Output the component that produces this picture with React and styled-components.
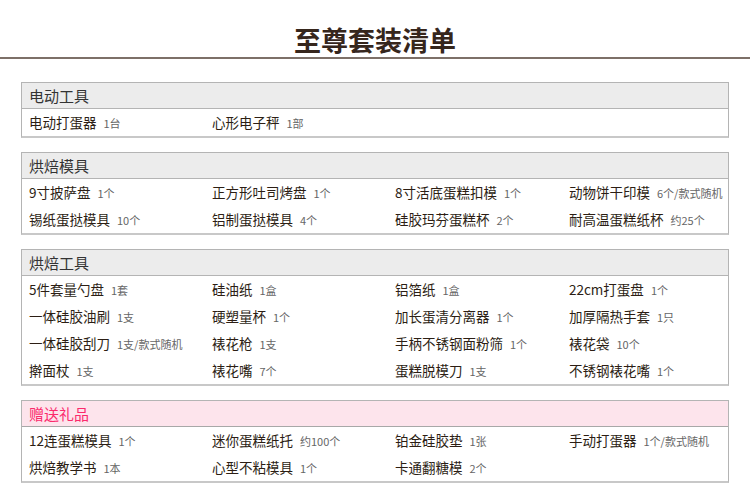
import React from 'react';
import styled, { createGlobalStyle } from 'styled-components';

const Global = createGlobalStyle`
  body { margin: 0; background: #fff; font-family: "Noto Sans CJK SC", "Noto Sans", sans-serif; }
`;

const sections = [
  { title: '电动工具', items: [['电动打蛋器', '1台'], ['心形电子秤', '1部']] },
  { title: '烘焙模具', items: [
    ['9寸披萨盘', '1个'], ['正方形吐司烤盘', '1个'], ['8寸活底蛋糕扣模', '1个'], ['动物饼干印模', '6个/款式随机'],
    ['锡纸蛋挞模具', '10个'], ['铝制蛋挞模具', '4个'], ['硅胶玛芬蛋糕杯', '2个'], ['耐高温蛋糕纸杯', '约25个'],
  ] },
  { title: '烘焙工具', items: [
    ['5件套量勺盘', '1套'], ['硅油纸', '1盒'], ['铝箔纸', '1盒'], ['22cm打蛋盘', '1个'],
    ['一体硅胶油刷', '1支'], ['硬塑量杯', '1个'], ['加长蛋清分离器', '1个'], ['加厚隔热手套', '1只'],
    ['一体硅胶刮刀', '1支/款式随机'], ['裱花枪', '1支'], ['手柄不锈钢面粉筛', '1个'], ['裱花袋', '10个'],
    ['擀面杖', '1支'], ['裱花嘴', '7个'], ['蛋糕脱模刀', '1支'], ['不锈钢裱花嘴', '1个'],
  ] },
  { title: '赠送礼品', gift: true, items: [
    ['12连蛋糕模具', '1个'], ['迷你蛋糕纸托', '约100个'], ['铂金硅胶垫', '1张'], ['手动打蛋器', '1个/款式随机'],
    ['烘焙教学书', '1本'], ['心型不粘模具', '1个'], ['卡通翻糖模', '2个'],
  ] },
];

const Page = styled.div`
  width: 750px;
  height: 503px;
  overflow: hidden;
`;

const Title = styled.h1`
  margin: 0;
  padding-top: 23px;
  height: 34px;
  text-align: center;
  font-size: 27px;
  font-weight: 700;
  color: #36261c;
  line-height: 34px;
  border-bottom: 2px solid #7d7068;
`;

const List = styled.div`
  padding: 23px 21px 0 21px;
  display: flex;
  flex-direction: column;
  gap: 14px;
`;

const Box = styled.div`
  border: 1px solid #b4b4b4;
  border-bottom: 2px solid #c8c8c8;
`;

const Header = styled.div`
  height: 25px;
  line-height: 25px;
  padding-left: 7px;
  font-size: 15px;
  background: ${p => (p.$gift ? '#fde4ec' : '#ececec')};
  color: ${p => (p.$gift ? '#fb2a6c' : '#333')};
  border-bottom: 1px solid ${p => (p.$gift ? '#a8a8a8' : '#b4b4b4')};
`;

const Grid = styled.div`
  display: grid;
  grid-template-columns: 183px 183px 174px auto;
  padding-left: 7px;
`;

const Item = styled.div`
  height: 27px;
  line-height: 27px;
  font-size: 13.5px;
  color: #2c1e14;
  white-space: nowrap;
`;

const Count = styled.span`
  margin-left: 7px;
  font-size: 11px;
  color: #666;
`;

export default function App() {
  return (
    <Page>
      <Global />
      <Title>至尊套装清单</Title>
      <List>
        {sections.map(s => (
          <Box key={s.title}>
            <Header $gift={s.gift}>{s.title}</Header>
            <Grid>
              {s.items.map(([n, c]) => (
                <Item key={n}>{n}<Count>{c}</Count></Item>
              ))}
            </Grid>
          </Box>
        ))}
      </List>
    </Page>
  );
}
